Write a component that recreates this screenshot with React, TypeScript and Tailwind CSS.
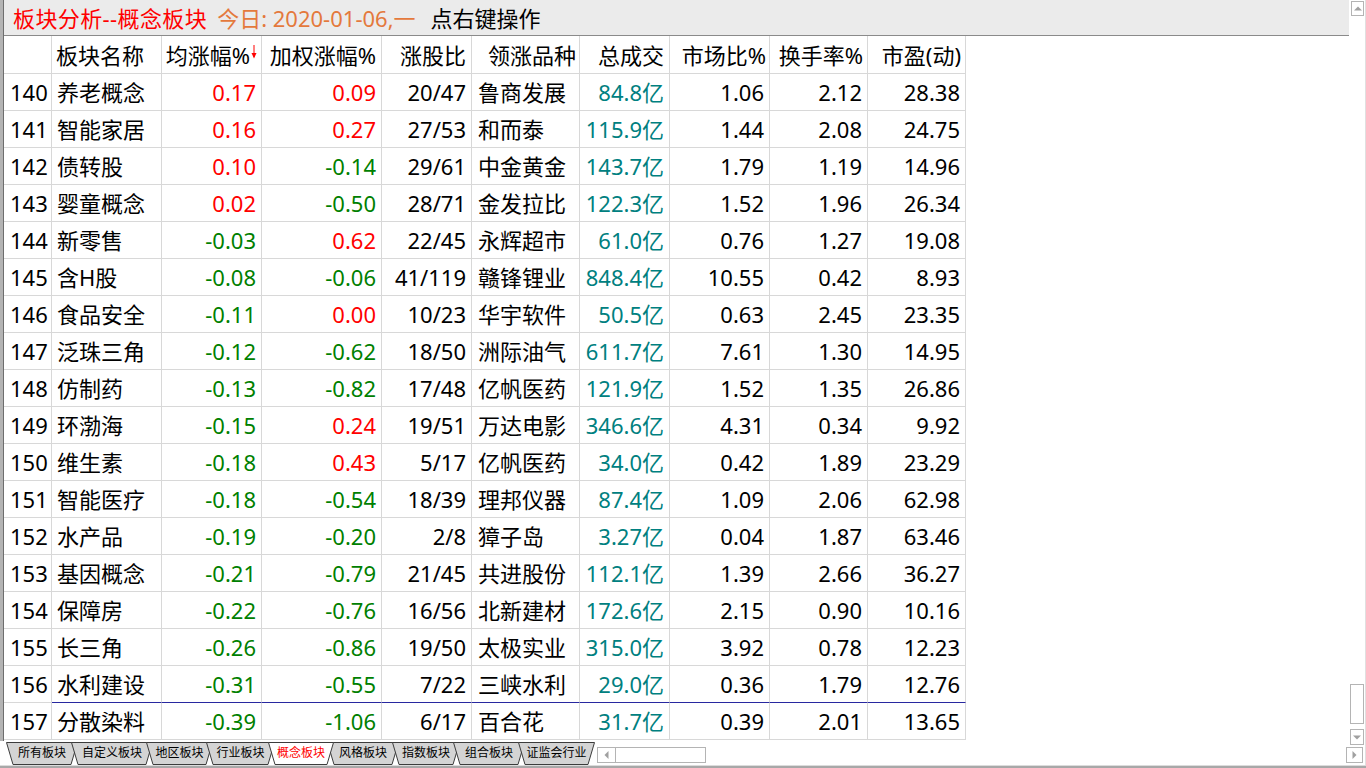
import React from 'react';

type Row = [string, string, string, string, string, string, string, string, string, string];

const rows: Row[] = [
  ['140', '养老概念', '0.17', '0.09', '20/47', '鲁商发展', '84.8亿', '1.06', '2.12', '28.38'],
  ['141', '智能家居', '0.16', '0.27', '27/53', '和而泰', '115.9亿', '1.44', '2.08', '24.75'],
  ['142', '债转股', '0.10', '-0.14', '29/61', '中金黄金', '143.7亿', '1.79', '1.19', '14.96'],
  ['143', '婴童概念', '0.02', '-0.50', '28/71', '金发拉比', '122.3亿', '1.52', '1.96', '26.34'],
  ['144', '新零售', '-0.03', '0.62', '22/45', '永辉超市', '61.0亿', '0.76', '1.27', '19.08'],
  ['145', '含H股', '-0.08', '-0.06', '41/119', '赣锋锂业', '848.4亿', '10.55', '0.42', '8.93'],
  ['146', '食品安全', '-0.11', '0.00', '10/23', '华宇软件', '50.5亿', '0.63', '2.45', '23.35'],
  ['147', '泛珠三角', '-0.12', '-0.62', '18/50', '洲际油气', '611.7亿', '7.61', '1.30', '14.95'],
  ['148', '仿制药', '-0.13', '-0.82', '17/48', '亿帆医药', '121.9亿', '1.52', '1.35', '26.86'],
  ['149', '环渤海', '-0.15', '0.24', '19/51', '万达电影', '346.6亿', '4.31', '0.34', '9.92'],
  ['150', '维生素', '-0.18', '0.43', '5/17', '亿帆医药', '34.0亿', '0.42', '1.89', '23.29'],
  ['151', '智能医疗', '-0.18', '-0.54', '18/39', '理邦仪器', '87.4亿', '1.09', '2.06', '62.98'],
  ['152', '水产品', '-0.19', '-0.20', '2/8', '獐子岛', '3.27亿', '0.04', '1.87', '63.46'],
  ['153', '基因概念', '-0.21', '-0.79', '21/45', '共进股份', '112.1亿', '1.39', '2.66', '36.27'],
  ['154', '保障房', '-0.22', '-0.76', '16/56', '北新建材', '172.6亿', '2.15', '0.90', '10.16'],
  ['155', '长三角', '-0.26', '-0.86', '19/50', '太极实业', '315.0亿', '3.92', '0.78', '12.23'],
  ['156', '水利建设', '-0.31', '-0.55', '7/22', '三峡水利', '29.0亿', '0.36', '1.79', '12.76'],
  ['157', '分散染料', '-0.39', '-1.06', '6/17', '百合花', '31.7亿', '0.39', '2.01', '13.65'],
];

const tabs = [
  { label: '所有板块', w: 'w-[72px]' },
  { label: '自定义板块', w: 'w-[82px]' },
  { label: '地区板块', w: 'w-[67px]' },
  { label: '行业板块', w: 'w-[69px]' },
  { label: '概念板块', w: 'w-[66px]', active: true },
  { label: '风格板块', w: 'w-[72px]' },
  { label: '指数板块', w: 'w-[68px]' },
  { label: '组合板块', w: 'w-[72px]' },
  { label: '证监会行业', w: 'w-[77px]' },
];
const tabPx = [72, 82, 67, 69, 66, 72, 68, 72, 77];

const font = { fontFamily: '"Noto Sans", "Noto Sans CJK SC", sans-serif' };

const upDown = (v: string) => (v.startsWith('-') ? 'text-[#008000]' : 'text-[#ff0000]');

const cell = 'flex items-center border-r border-b border-[#d8d8d8] whitespace-nowrap leading-none';

const SortArrow = () => (
  <svg width="6" height="14" viewBox="0 0 6 14" className="ml-[1px] self-start mt-[9px]">
    <line x1="3" y1="0" x2="3" y2="12" stroke="#ff0000" strokeWidth="1" />
    <polygon points="0.5,8 5.5,8 3,13.5" fill="#ff0000" />
  </svg>
);

const Tab = ({ label, w, px, active }: { label: string; w: string; px: number; active?: boolean }) => (
  <div className={`relative h-[23px] shrink-0 flex items-center justify-center ${w}`}>
    <svg className="absolute inset-0" width={px} height={23} viewBox={`0 0 ${px} 23`}>
      <polygon
        points={`0.5,0.5 ${px - 0.5},0.5 ${px - 7},22.5 7,22.5`}
        fill={active ? '#ffffff' : '#d4d4d4'}
        stroke="#3c3c3c"
        strokeWidth="1"
      />
    </svg>
    <span className={`relative text-[12px] mt-[-1px] ${active ? 'text-[#ff0000]' : 'text-black'}`}>{label}</span>
  </div>
);

const App: React.FC = () => {
  return (
    <div className="w-[1366px] h-[768px] bg-white flex flex-col overflow-hidden" style={font}>
      <div className="flex h-[765px]">
        <div className="flex-1 flex flex-col">
          <div className="flex h-[741px]">
            <div className="w-[4px] bg-[#b4b4b4] border-r border-[#6e6e6e]" />
            <div className="flex-1 flex flex-col">
              <div className="h-[36px] bg-[#ebebeb] border-b border-[#8a8a8a] flex items-center pl-[9px] text-[22px] leading-none">
                <span className="text-[#ff0000] tracking-[0.4px]">板块分析--概念板块</span>
                <span className="text-[#e4793c] ml-[10px]">今日: 2020-01-06,一</span>
                <span className="text-black ml-[15px]">点右键操作</span>
              </div>
              <div className="grid grid-cols-[48px_110px_100px_120px_90px_108px_90px_100px_98px_98px] w-[962px] text-[22px] text-black">
                <div className={`${cell} h-[38px]`} />
                <div className={`${cell} h-[38px] pl-[4px]`}>板块名称</div>
                <div className={`${cell} h-[38px] justify-end pr-[4px]`}>
                  均涨幅%
                  <SortArrow />
                </div>
                <div className={`${cell} h-[38px] justify-end pr-[5px]`}>加权涨幅%</div>
                <div className={`${cell} h-[38px] justify-end pr-[5px]`}>涨股比</div>
                <div className={`${cell} h-[38px] justify-end pr-[3px]`}>领涨品种</div>
                <div className={`${cell} h-[38px] justify-end pr-[5px]`}>总成交</div>
                <div className={`${cell} h-[38px] justify-end pr-[3px]`}>市场比%</div>
                <div className={`${cell} h-[38px] justify-end pr-[4px]`}>换手率%</div>
                <div className={`${cell} h-[38px] justify-end pr-[4px]`}>市盈(动)</div>
                {rows.map((r, i) => {
                  const line = i === 16 ? 'border-b-[#2828a0]' : '';
                  return (
                    <React.Fragment key={r[0]}>
                      <div className={`${cell} h-[37px] pl-[6px]`}>{r[0]}</div>
                      <div className={`${cell} ${line} h-[37px] pl-[5px]`}>{r[1]}</div>
                      <div className={`${cell} ${line} h-[37px] justify-end pr-[5px] ${upDown(r[2])}`}>{r[2]}</div>
                      <div className={`${cell} ${line} h-[37px] justify-end pr-[5px] ${upDown(r[3])}`}>{r[3]}</div>
                      <div className={`${cell} ${line} h-[37px] justify-end pr-[5px]`}>{r[4]}</div>
                      <div className={`${cell} ${line} h-[37px] pl-[6px]`}>{r[5]}</div>
                      <div className={`${cell} ${line} h-[37px] justify-end pr-[5px] text-[#008080]`}>{r[6]}</div>
                      <div className={`${cell} ${line} h-[37px] justify-end pr-[5px]`}>{r[7]}</div>
                      <div className={`${cell} ${line} h-[37px] justify-end pr-[5px]`}>{r[8]}</div>
                      <div className={`${cell} ${line} h-[37px] justify-end pr-[5px]`}>{r[9]}</div>
                    </React.Fragment>
                  );
                })}
              </div>
            </div>
          </div>
          <div className="h-[24px] flex items-start pl-[6px]">
            <div className="flex items-start mt-[1px]">
              {tabs.map((t, i) => (
                <div
                  key={t.label}
                  className={i === 0 ? 'relative' : 'relative -ml-[7px]'}
                  style={{ zIndex: t.active ? 50 : i + 1 }}
                >
                  <Tab label={t.label} w={t.w} px={tabPx[i]} active={t.active} />
                </div>
              ))}
            </div>
            <div className="ml-[2px] mt-[6px] w-[109px] h-[16px] border border-[#b4b4b4] flex">
              <div className="w-[18px] h-full border-r border-[#b4b4b4] flex items-center justify-center">
                <svg width="5" height="8" viewBox="0 0 5 8">
                  <polygon points="4.5,0 4.5,8 0.5,4" fill="#a0a0a0" />
                </svg>
              </div>
            </div>
          </div>
        </div>
        <div className="w-[17px] flex flex-col border-r border-[#e0e0e0]">
          <div className="ml-[2px] mt-[1px] w-[13px] h-[15px] border border-[#b4b4b4] flex items-center justify-center">
            <svg width="8" height="5" viewBox="0 0 8 5">
              <polygon points="0,4.5 8,4.5 4,0.5" fill="#a0a0a0" />
            </svg>
          </div>
          <div className="flex-1" />
          <div className="ml-[1px] w-[14px] h-[40px] border border-[#b4b4b4]" />
          <div className="ml-[1px] mt-[5px] w-[14px] h-[16px] border border-[#b4b4b4] flex items-center justify-center">
            <svg width="8" height="5" viewBox="0 0 8 5">
              <polygon points="0,0.5 8,0.5 4,4.5" fill="#a0a0a0" />
            </svg>
          </div>
          <div className="-ml-[3px] mt-[2px] mb-[2px] w-[17px] h-[16px] border border-[#b4b4b4] flex items-center justify-center">
            <svg width="5" height="8" viewBox="0 0 5 8">
              <polygon points="0.5,0 0.5,8 4.5,4" fill="#a0a0a0" />
            </svg>
          </div>
        </div>
      </div>
      <div className="h-[3px] bg-[#a8a8a8] border-t border-[#dcdcdc]" />
    </div>
  );
};

export default App;
